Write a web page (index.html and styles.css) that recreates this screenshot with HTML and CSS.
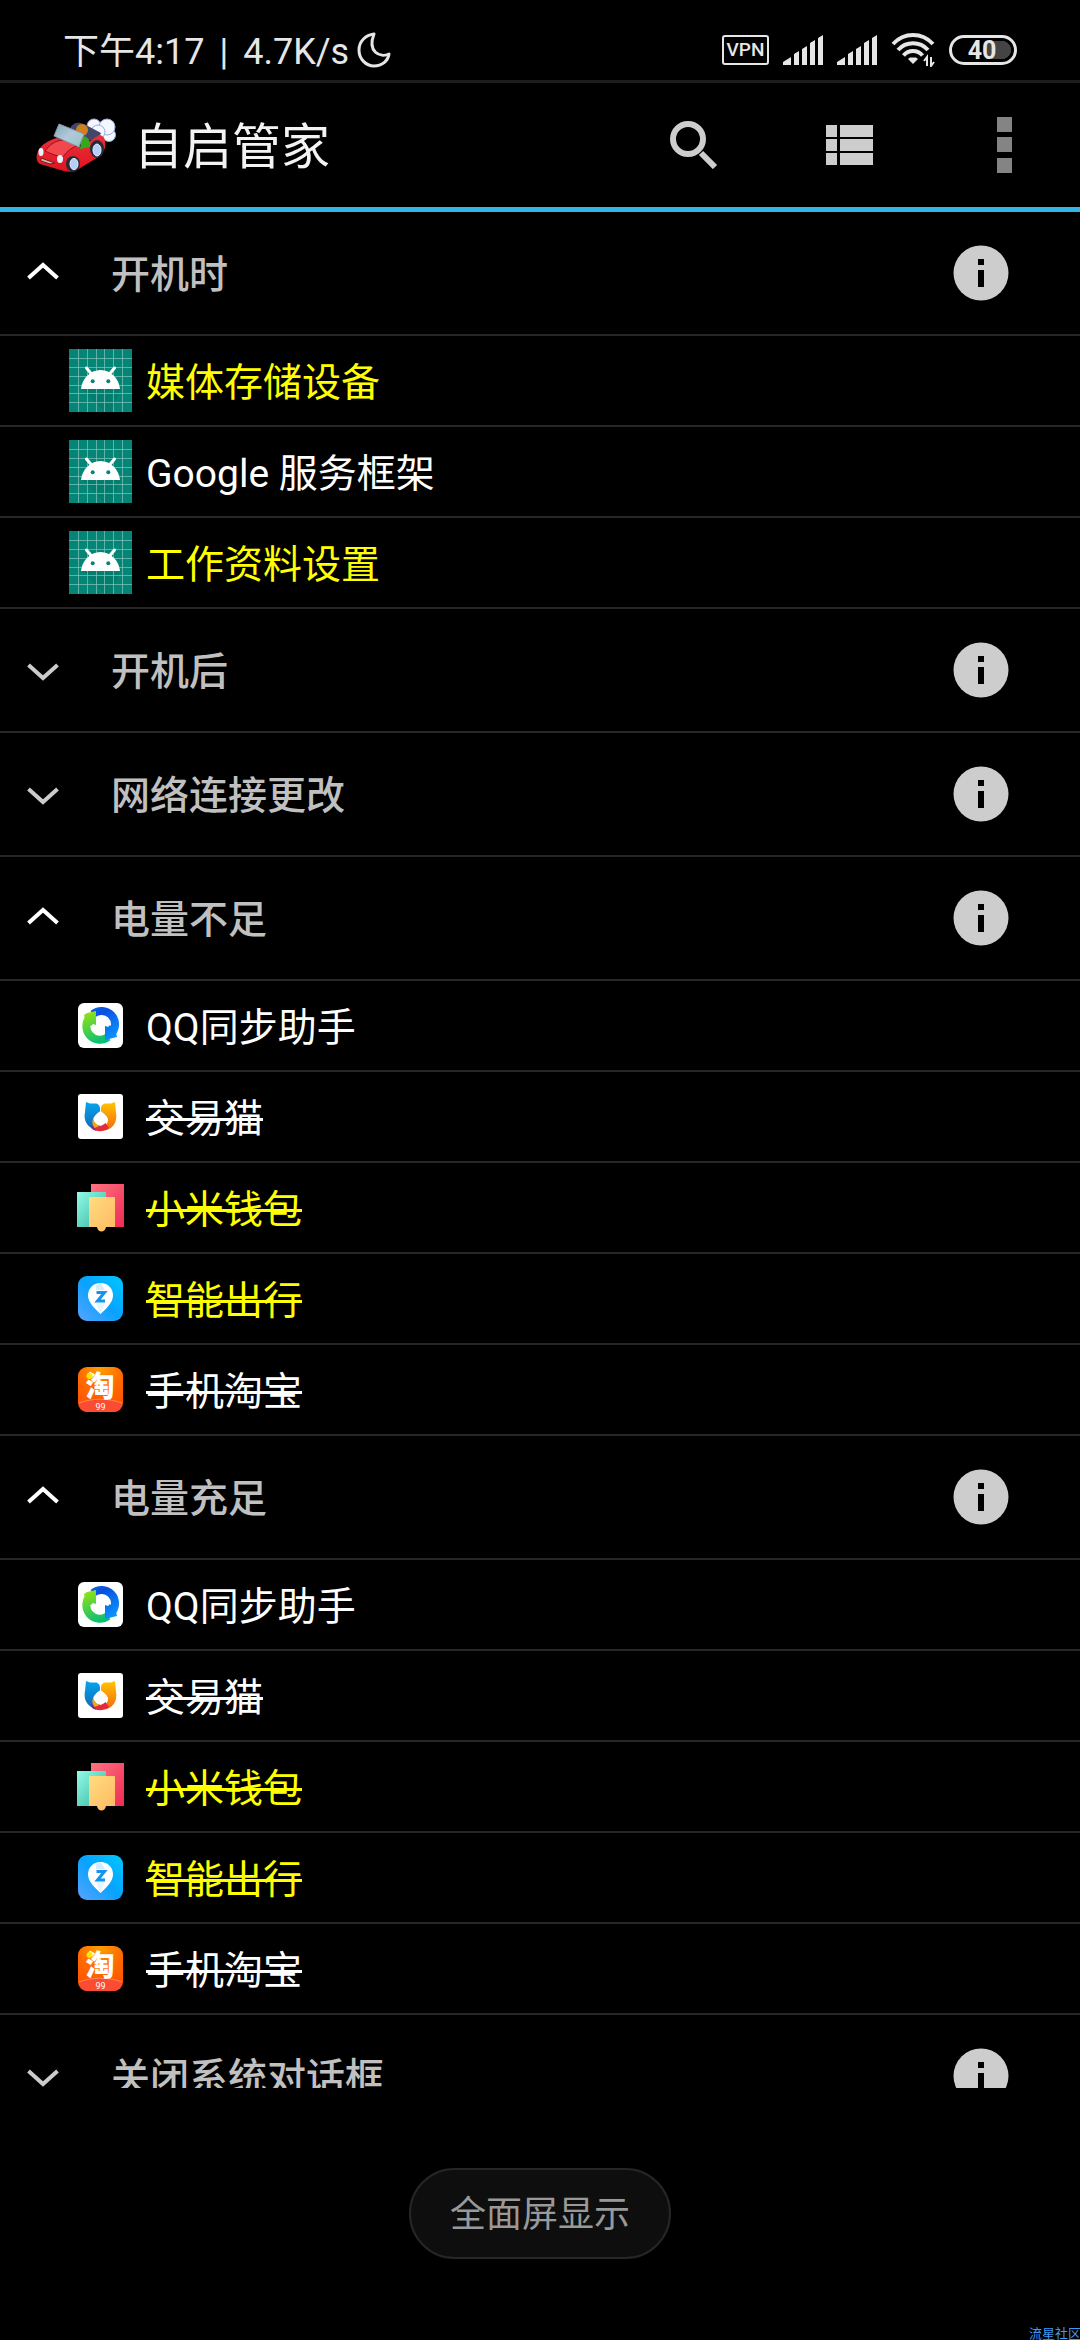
FILE: index.html
```html
<!DOCTYPE html>
<html lang="zh-CN">
<head>
<meta charset="utf-8">
<meta name="viewport" content="width=device-width, initial-scale=1">
<title>自启管家</title>
<link rel="stylesheet" href="styles.css">
</head>
<body>
<svg class="sprite" aria-hidden="true">
  <defs>
    <linearGradient id="qqBlue" gradientUnits="userSpaceOnUse" x1="12" y1="5" x2="36" y2="36"><stop offset="0" stop-color="#0a62e0"/><stop offset=".3" stop-color="#0a50e0"/><stop offset="1" stop-color="#0a98ff"/></linearGradient>
    <linearGradient id="qqGreen" gradientUnits="userSpaceOnUse" x1="8" y1="8" x2="20" y2="40"><stop offset="0" stop-color="#98e410"/><stop offset="1" stop-color="#08bf76"/></linearGradient>
    <linearGradient id="catBlue" x1="0" y1="0" x2="0" y2="1"><stop offset="0" stop-color="#06a4ee"/><stop offset="1" stop-color="#1467b4"/></linearGradient>
    <linearGradient id="catGold" x1="0" y1="0" x2="0" y2="1"><stop offset="0" stop-color="#ffc400"/><stop offset="1" stop-color="#f46a10"/></linearGradient>
    <linearGradient id="walletRed" x1="0" y1="0" x2="1" y2="1"><stop offset="0" stop-color="#ff7480"/><stop offset="1" stop-color="#f02a56"/></linearGradient>
    <linearGradient id="walletTeal" x1="0" y1="0" x2="1" y2="1"><stop offset="0" stop-color="#92fbe6"/><stop offset="1" stop-color="#34b5a2"/></linearGradient>
    <linearGradient id="walletGold" x1="0" y1="0" x2="1" y2="1"><stop offset="0" stop-color="#ffdc80"/><stop offset="1" stop-color="#ffb962"/></linearGradient>
    <linearGradient id="tripBlue" x1="0" y1="1" x2="1" y2="0"><stop offset="0" stop-color="#58a4ff"/><stop offset=".5" stop-color="#08a2ff"/><stop offset="1" stop-color="#00c8ff"/></linearGradient>
    <radialGradient id="taoOrange" cx=".5" cy="0" r="1"><stop offset="0" stop-color="#ffa000"/><stop offset=".5" stop-color="#ff6a00"/><stop offset="1" stop-color="#ff5000"/></radialGradient>
    <linearGradient id="glass" x1="0" y1="0" x2="1" y2="1"><stop offset="0" stop-color="#7fa9b4"/><stop offset=".5" stop-color="#b4c8dc"/><stop offset="1" stop-color="#8fc4c0"/></linearGradient>
    <linearGradient id="carRed" x1="0" y1="0" x2="0" y2="1"><stop offset="0" stop-color="#e8313a"/><stop offset="1" stop-color="#e01420"/></linearGradient>
  </defs>
  <symbol id="chevron-up" viewBox="0 0 32 24"><path d="M1.500 17 16 4l14.500 13" fill="none" stroke="#fff" stroke-width="4"/></symbol>
  <symbol id="chevron-down" viewBox="0 0 32 24"><path d="M1.500 7 16 20 30.500 7" fill="none" stroke="#ccc" stroke-width="4"/></symbol>
  <symbol id="info" viewBox="0 0 56 56"><circle cx="28" cy="28" r="27.500" fill="#cdcdcd"/><path d="M25 14h6v6h-6zM25 25h6v17h-6z"/></symbol>
  <symbol id="signal" viewBox="0 0 40 30"><path d="M0 30v-3l8-5v8zM11 30V19l5-3v14zM19 30V14l5-3v19zM27 30V8l5-3v25zM35 30V3l5-3v30z" fill="#e6e6e6"/></symbol>
  <symbol id="android" viewBox="0 0 63 63">
    <path d="M0 0h63v63H0z" fill="#048576"/>
    <path d="M13 40h38l-8 23H36z" fill="#037365" opacity=".4"/>
    <path d="M9.500 0v63M18.500 0v63M27.500 0v63M35.500 0v63M44.500 0v63M53.500 0v63M0 9.500h63M0 18.500h63M0 27.500h63M0 36.500h63M0 44.500h63M0 53.500h63" fill="none" stroke="#7cc2b8" stroke-width="1" opacity=".75"/>
    <path d="M12 40c1-10 9-19 19.500-19S50 30 51 40z" fill="#fff"/>
    <path d="m17.500 19 5 6M45.500 19l-5 6" stroke="#fff" stroke-width="3" stroke-linecap="round"/>
    <circle cx="23.700" cy="32.300" r="2" fill="#048576"/><circle cx="39.300" cy="32.300" r="2" fill="#048576"/>
  </symbol>
  <symbol id="qq-sync" viewBox="0 0 45 45">
    <rect width="45" height="45" rx="6" fill="#fff"/>
    <path d="M30 34A13.500 13.500 0 0 1 12 14" fill="none" stroke="url(#qqGreen)" stroke-width="8"/>
    <path d="M15 11A13.500 13.500 0 0 1 34 30" fill="none" stroke="url(#qqBlue)" stroke-width="8"/>
    <path d="m6 12 3-2 9-2v14l-3-1-2 2-5-3z" fill="url(#qqGreen)"/>
    <path d="m27 23 3 1 2-2 6 8 1 4-4 1-8 2z" fill="url(#qqBlue)"/>
  </symbol>
  <symbol id="cat" viewBox="0 0 45 45">
    <rect width="45" height="45" rx="3" fill="#fff"/>
    <path d="m8 8 4 1.500h5c3 0 5 2 5 5v4c-3 2-7 4-7 8 0 4 2 7 5 10C10 35 5 27 7 18z" fill="url(#catBlue)"/>
    <path d="m37 8-4 1.500h-5c-3 0-5 2-5 5v4c3 2 7 4 7 7 0 5-4 7-7 11 11 1 17-8 15-18z" fill="url(#catGold)"/>
    <path d="M13 32c5 2 9-1 13-5l5 7c-5 4-12 4-17 1z" fill="#e22b3d"/><path d="m13 31 3 1 2 5c-2-1-5-3-5-6z" fill="#7b2f8e"/><path d="M15.500 24c0 4 3 6 6 8l-5 2c-2-3-3-6-1-10z" fill="#f6a21a"/>
    <path d="M22.500 17c-4 3-7 5-6.500 9 1 3 4 5 6.500 6 3-1 6-3 6.500-6 1-4-3-6-6.500-9z" fill="#fff"/>
  </symbol>
  <symbol id="wallet" viewBox="0 0 49 49">
    <path d="M15 1h33v43H15z" fill="url(#walletRed)"/><path d="M1 9h29v35H1z" fill="url(#walletTeal)"/>
    <path d="M14 14h24a1 1 0 0 1 1 1v29h-9c-1 6-8 6-9 0h-8V15a1 1 0 0 1 1-1z" fill="url(#walletGold)"/>
  </symbol>
  <symbol id="trip" viewBox="0 0 45 45">
    <rect width="45" height="45" rx="9" fill="url(#tripBlue)"/>
    <path d="M22.500 7C15 7 10 12.500 10 19.500S17 33 22.500 38C28 33 35 26.500 35 19.500S30 7 22.500 7z" fill="#fff"/>
    <path d="M22.500 7 27 14h-9v-5z" fill="#d4ebfb"/><path d="M18 27h9l-4.500 11z" fill="#e8f4fd"/>
    <path d="M18.500 16.500h8l-7 8.500h7.500" fill="none" stroke="#1493f0" stroke-width="3"/>
  </symbol>
  <symbol id="taobao" viewBox="0 0 45 45">
    <rect width="45" height="45" rx="9" fill="url(#taoOrange)"/>
    <path d="M1 36c13-5 30-5 43 0-1 6-4 9-9 9H10c-5 0-8-3-9-9z" fill="#fb4b32"/><path d="M1 36c13-5 30-5 43 0" fill="none" stroke="#ff8a55" stroke-width="1"/>
    <text x="22" y="30" class="tao-mark">淘</text><circle cx="11.500" cy="9" r="3" fill="#ffe600"/>
    <text x="22.500" y="43" class="tao-num">99</text>
  </symbol>
</svg>

<div class="screen">
  <div class="status">
    <div class="status-text"><span>下午4:17</span><span>|</span><span>4.7K/s</span></div>
    <svg class="moon" viewBox="0 0 34 36" aria-hidden="true"><path d="M17 2C9 3 2 9 2 18s7 16 15 16c8 0 14-5 15-12-9 4-22-2-15-20z" fill="none" stroke="#e6e6e6" stroke-width="3" stroke-linejoin="round"/></svg>
    <div class="status-icons">
      <span class="vpn">VPN</span>
      <svg class="signal" aria-hidden="true"><use href="#signal"/></svg>
      <svg class="signal" aria-hidden="true"><use href="#signal"/></svg>
      <svg class="wifi" viewBox="0 0 44 34" aria-hidden="true"><g fill="none" stroke="#e6e6e6" stroke-width="4"><path d="M2 11C13-1 31-1 42 11"/><path d="M7 17c8-9 22-9 30 0"/><path d="M12.500 22.500c5-6 14-6 19 0"/></g><path d="m17 26 2-1.500h6l2 1.500-5 5z" fill="#e6e6e6"/><path d="M36 33v-9l-3 4M40 24v9l3-4" fill="none" stroke="#e6e6e6" stroke-width="2"/></svg>
      <span class="battery">40</span>
    </div>
  </div>

  <header class="toolbar">
    <svg class="car" viewBox="0 0 80 54" aria-hidden="true">
      <g fill="#f4f7ff" stroke="#98aede" stroke-width="1"><circle cx="73" cy="17" r="6.500"/><circle cx="58" cy="8" r="7"/><circle cx="71" cy="9" r="8"/><circle cx="62" cy="14" r="7"/></g>
      <path d="M34 10c4-6 8-6 14-4l17 9-4 8-24-3z" fill="#45446a"/>
      <path d="M2 33C6 26 13 22 21 20l24 9 18-12c5 0 7 5 6 13l-5 8-23 14c-4 2-9 2-13 1L4 46c-4-2-4-8-2-13z" fill="url(#carRed)"/>
      <path d="M9 33c6-8 12-11 20-11l15 5c-8 2-13 6-17 12-6-1-12-3-18-6z" fill="#f0484c" stroke="#a30d18" stroke-width="1"/>
      <circle cx="46" cy="12" r="6" fill="#cf8120"/><path d="M46 18c6 0 9 5 8 11l-10 2z" fill="#37a81c"/>
      <path d="m23 6 25 10-5 13-25-11z" fill="url(#glass)" stroke="#8899a8" stroke-width="1"/>
      <g fill="#292a3b"><ellipse cx="37" cy="46" rx="7" ry="8"/><ellipse cx="61" cy="31" rx="7" ry="9"/></g>
      <g fill="#b5cff8" stroke="#e8f0ff" stroke-width="1"><ellipse cx="38" cy="46" rx="4" ry="5.500"/><ellipse cx="61" cy="32" rx="4" ry="6"/></g>
      <g fill="#eaf3ff"><ellipse cx="5" cy="34" rx="2.500" ry="4"/><ellipse cx="24" cy="41" rx="3" ry="4"/></g>
      <path d="m5 40 14 5-5 1-9-3z" fill="#c9b6b0" stroke="#7a1a1c" stroke-width="1"/>
    </svg>
    <h1 class="title">自启管家</h1>
    <button class="action" aria-label="搜索"><svg width="48" height="48" viewBox="0 0 48 48"><circle cx="18" cy="18" r="15" fill="none" stroke="#cdcdcd" stroke-width="6"/><path d="m31 32 14 14" stroke="#cdcdcd" stroke-width="6"/></svg></button>
    <button class="action" aria-label="列表"><svg width="48" height="40" viewBox="0 0 48 40"><path d="M0 0h11v12H0zM14 0h33v12H14zM0 14h11v12H0zM14 14h33v12H14zM0 28h11v12H0zM14 28h33v12H14z" fill="#cdcdcd"/></svg></button>
    <button class="action overflow" aria-label="更多选项"><svg width="15" height="56" viewBox="0 0 15 56"><path d="M0 0h15v15H0zM0 20h15v15H0zM0 41h15v15H0z" fill="#848484"/></svg></button>
  </header>

  <main class="list">
    <div class="group"><button class="toggle" aria-expanded="true"><svg class="chevron"><use href="#chevron-up"/></svg><span class="label">开机时</span></button><button class="info" aria-label="信息"><svg><use href="#info"/></svg></button></div>
    <ul class="apps">
      <li class="app system"><svg class="icon full"><use href="#android"/></svg><span class="label">媒体存储设备</span></li>
      <li class="app"><svg class="icon full"><use href="#android"/></svg><span class="label">Google 服务框架</span></li>
      <li class="app system"><svg class="icon full"><use href="#android"/></svg><span class="label">工作资料设置</span></li>
    </ul>
    <div class="group"><button class="toggle" aria-expanded="false"><svg class="chevron"><use href="#chevron-down"/></svg><span class="label">开机后</span></button><button class="info" aria-label="信息"><svg><use href="#info"/></svg></button></div>
    <div class="group"><button class="toggle" aria-expanded="false"><svg class="chevron"><use href="#chevron-down"/></svg><span class="label">网络连接更改</span></button><button class="info" aria-label="信息"><svg><use href="#info"/></svg></button></div>
    <div class="group"><button class="toggle" aria-expanded="true"><svg class="chevron"><use href="#chevron-up"/></svg><span class="label">电量不足</span></button><button class="info" aria-label="信息"><svg><use href="#info"/></svg></button></div>
    <ul class="apps">
      <li class="app"><svg class="icon"><use href="#qq-sync"/></svg><span class="label">QQ同步助手</span></li>
      <li class="app"><svg class="icon"><use href="#cat"/></svg><s class="label">交易猫</s></li>
      <li class="app system"><svg class="icon wide"><use href="#wallet"/></svg><s class="label">小米钱包</s></li>
      <li class="app system"><svg class="icon"><use href="#trip"/></svg><s class="label">智能出行</s></li>
      <li class="app"><svg class="icon"><use href="#taobao"/></svg><s class="label">手机淘宝</s></li>
    </ul>
    <div class="group"><button class="toggle" aria-expanded="true"><svg class="chevron"><use href="#chevron-up"/></svg><span class="label">电量充足</span></button><button class="info" aria-label="信息"><svg><use href="#info"/></svg></button></div>
    <ul class="apps">
      <li class="app"><svg class="icon"><use href="#qq-sync"/></svg><span class="label">QQ同步助手</span></li>
      <li class="app"><svg class="icon"><use href="#cat"/></svg><s class="label">交易猫</s></li>
      <li class="app system"><svg class="icon wide"><use href="#wallet"/></svg><s class="label">小米钱包</s></li>
      <li class="app system"><svg class="icon"><use href="#trip"/></svg><s class="label">智能出行</s></li>
      <li class="app"><svg class="icon"><use href="#taobao"/></svg><s class="label">手机淘宝</s></li>
    </ul>
    <div class="group"><button class="toggle" aria-expanded="false"><svg class="chevron"><use href="#chevron-down"/></svg><span class="label">关闭系统对话框</span></button><button class="info" aria-label="信息"><svg><use href="#info"/></svg></button></div>
  </main>

  <footer class="footer">
    <button class="fullscreen">全面屏显示</button>
  </footer>
  <span class="watermark">流星社区</span>
</div>
</body>
</html>
```
FILE: styles.css
```css
* { box-sizing: border-box; }

body {
  margin: 0;
  background: #000;
  color: #fff;
  font-family: Roboto, "Noto Sans CJK SC", sans-serif;
}

button {
  margin: 0;
  padding: 0;
  border: 0;
  background: none;
  color: inherit;
  font: inherit;
}

svg { display: block; flex: none; }
.sprite { position: absolute; width: 0; height: 0; }

.screen {
  position: relative;
  display: flex;
  flex-direction: column;
  height: 100vh;
  overflow: hidden;
}

/* status bar */
.status {
  display: flex;
  flex: none;
  align-items: center;
  height: 83px;
  padding: 20px 63px 0;
  border-bottom: 3px solid #1c1c1c;
  color: #e6e6e6;
}
.status-text {
  display: flex;
  gap: 15px;
  padding-top: 4px;
  font-size: 36px;
  line-height: 40px;
  white-space: nowrap;
}
.moon { width: 34px; height: 36px; margin-left: 8px; }
.status-icons { display: flex; align-items: center; gap: 14px; margin-left: auto; }
.vpn {
  width: 47px;
  height: 30px;
  border: 2px solid #e6e6e6;
  border-radius: 3px;
  font-size: 19px;
  font-weight: 500;
  line-height: 26px;
  text-align: center;
}
.signal { width: 40px; height: 30px; }
.wifi { width: 44px; height: 34px; }
.battery {
  width: 68px;
  height: 30px;
  border: 3px solid #e6e6e6;
  border-radius: 15px;
  padding-right: 2px;
  background: linear-gradient(90deg, #444 18px, transparent 18px) 34px 3px / 18px 18px no-repeat,
    radial-gradient(circle at 50% 50%, #444 9px, transparent 9px) 41px 3px / 18px 18px no-repeat;
  font-size: 25px;
  font-weight: 700;
  line-height: 25px;
  text-align: center;
}

/* title bar */
.toolbar {
  display: flex;
  flex: none;
  align-items: center;
  height: 129px;
  border-bottom: 5px solid #33b5e5;
}
.car { width: 80px; height: 54px; margin: 0 18px 0 36px; }
.title {
  flex: 1;
  margin: 0;
  padding-top: 6px;
  font-size: 49px;
  font-weight: 400;
  line-height: 60px;
  color: #f3f3f3;
}
.action { display: grid; place-items: center; width: 156px; height: 100%; }
.action.overflow { width: 152px; }

/* grouped list */
.list { flex: 1; min-height: 0; overflow: hidden; font-size: 39px; line-height: 46px; }
.label { padding-top: 4px; }
.group {
  display: flex;
  height: 124px;
  border-bottom: 2px solid #262626;
  color: #c0c0c0;
}
.toggle {
  display: flex;
  flex: 1;
  align-items: center;
  gap: 52px;
  padding-left: 27px;
  font-weight: 500;
  text-align: left;
}
.chevron { width: 32px; height: 24px; }
.info { display: grid; place-items: center; width: 198px; }
.info svg { width: 56px; height: 56px; }

.apps { margin: 0; padding: 0; list-style: none; }
.app {
  display: flex;
  align-items: center;
  gap: 14px;
  height: 91px;
  padding-left: 69px;
  border-bottom: 2px solid #262626;
}
.system { color: #ff0; }
.icon { width: 63px; height: 45px; }
.icon.full { height: 63px; }
.icon.wide { height: 49px; }

.tao-mark { fill: #fff; font: 900 29px "Noto Sans CJK SC", sans-serif; text-anchor: middle; }
.tao-num { fill: #fff; font: 9px Roboto, sans-serif; text-anchor: middle; }

/* bottom area */
.footer { display: flex; flex: none; align-items: flex-start; justify-content: center; height: 252px; padding-top: 80px; }
.fullscreen {
  width: 262px;
  height: 91px;
  padding-bottom: 5px;
  border: 2px solid #262626;
  border-radius: 46px;
  background: #0e0e0e;
  color: #999;
  font-size: 36px;
}
.watermark {
  position: absolute;
  right: 0;
  bottom: -3px;
  width: 51px;
  overflow: hidden;
  color: #3f9af0;
  font-size: 13px;
  line-height: 18px;
  white-space: nowrap;
}
```
